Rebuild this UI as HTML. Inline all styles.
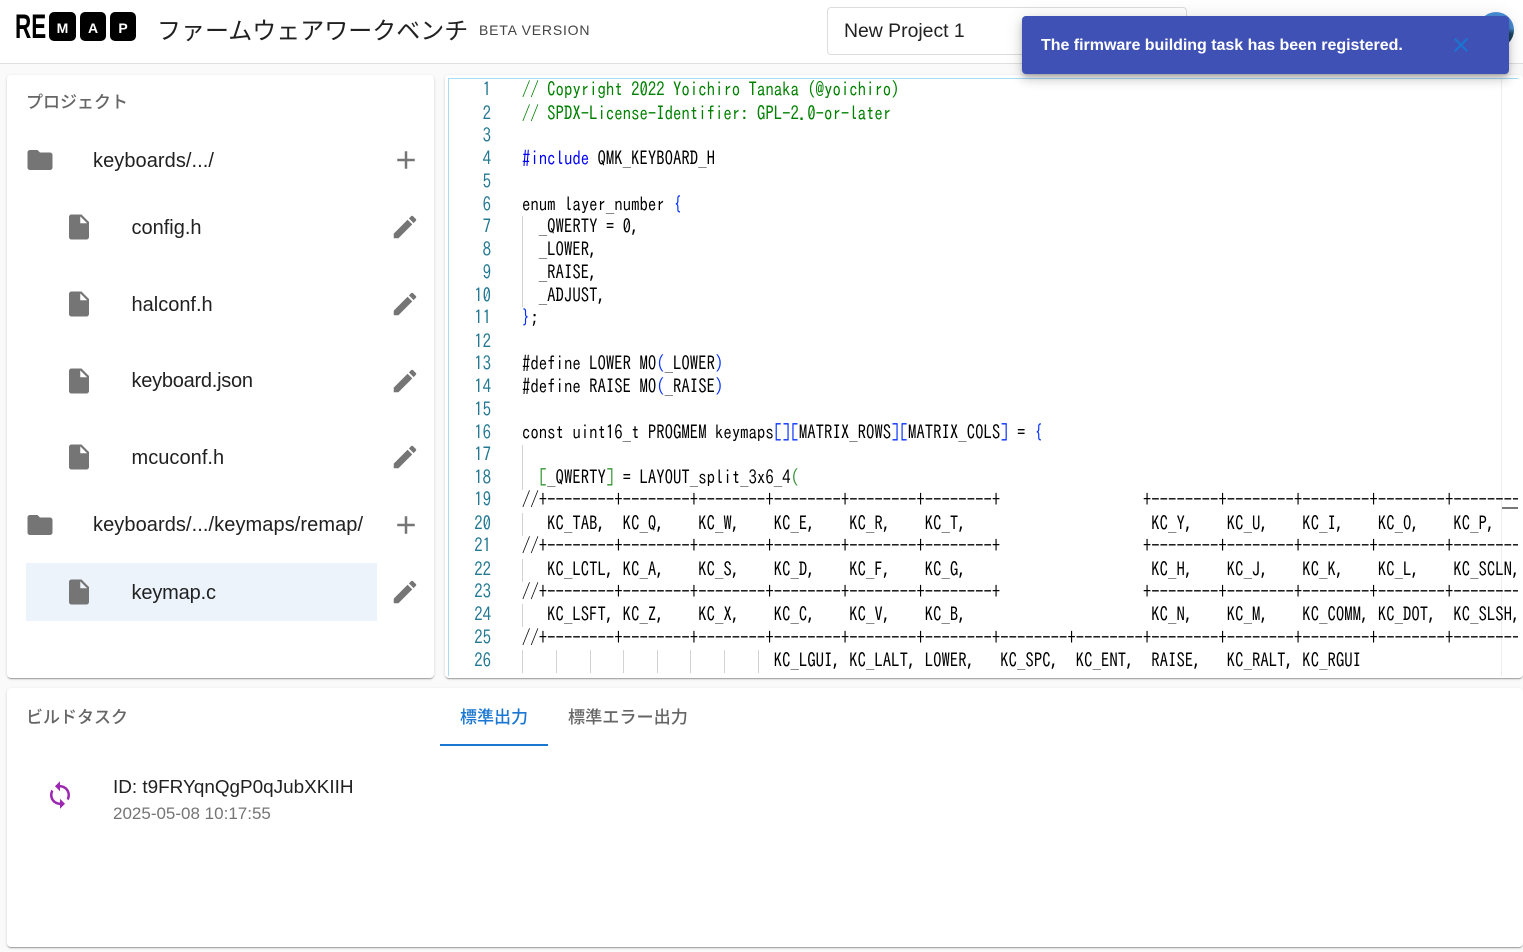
<!DOCTYPE html>
<html lang="ja"><head><meta charset="utf-8"><title>Remap</title>
<style>
html,body{margin:0;padding:0;width:1523px;height:952px;overflow:hidden;background:#fafafa;font-family:"Liberation Sans","Noto Sans CJK JP",sans-serif;color:#212121}
div,span,svg{box-sizing:border-box}
.a{position:absolute;white-space:nowrap}
.card{position:absolute;background:#fff;border-radius:4px;box-shadow:0 2px 1px -1px rgba(0,0,0,.2),0 1px 1px 0 rgba(0,0,0,.14),0 1px 3px 0 rgba(0,0,0,.12)}
svg.i{position:absolute;width:30px;height:30px;fill:#757575}
.t{position:absolute;white-space:nowrap;font-size:20px;line-height:24px;color:#212121}
.k{position:absolute;width:27px;height:29px;top:12px;background:#000;border-radius:5px;color:#fff;font:bold 14px/32px 'Liberation Sans',sans-serif;text-align:center}
#code{position:absolute;left:448px;top:78px;width:1070px;height:598px;overflow:hidden;border-top:1px solid #a6dcf6;border-left:1px solid #a6dcf6;font-family:"IPAGothic",monospace;font-size:19px;color:#000}
#code .l,#code .n{position:absolute;white-space:pre;line-height:24px;height:24px}
#code .l{left:73px;transform:scaleX(.8832);transform-origin:0 50%;width:1400px}
#code .n{left:0;width:42px;text-align:right;color:#237893;transform:scaleX(.8832);transform-origin:100% 50%}
.g{color:#008000}.b{color:#0000ff}.c{color:#0431fa}.d{color:#319331}.e{color:#7b3814}
.v{position:absolute;width:1px;background:#d3d3d3}
</style></head><body>

<div class="a" style="left:0;top:0;width:1523px;height:64px;background:#fff;border-bottom:1px solid #e0e0e0"></div>
<div class="a" style="left:15px;top:8px;font:bold 34px/38px 'Liberation Sans',sans-serif;color:#000;transform-origin:0 0;transform:scaleX(.66)">RE</div>
<div class="k" style="left:49px">M</div>
<div class="k" style="left:80px;width:26px">A</div>
<div class="k" style="left:110px;width:26px">P</div>
<div class="a" style="left:157px;top:14px;font-size:24px;line-height:36px;color:#212121">ファームウェアワークベンチ</div>
<div class="a" style="left:479px;top:20px;font-size:14px;line-height:20px;letter-spacing:.8px;color:#444">BETA VERSION</div>
<div class="a" style="left:827px;top:7px;width:360px;height:48px;border:1px solid #ddd;border-radius:4px;background:#fff"></div>
<div class="a" style="left:844px;top:18px;font-size:19.4px;line-height:26px;color:#212121">New Project 1</div>
<div class="a" style="left:1478px;top:12px;width:36px;height:36px;border-radius:50%;background:linear-gradient(#4a8fd8 0%,#4a8fd8 45%,#1e4a66 60%,#16333f 100%)"></div>

<div class="card" style="left:7px;top:75px;width:427px;height:603px"></div>
<div class="a" style="left:26px;top:90px;font-size:17px;font-weight:500;line-height:26px;color:#666">プロジェクト</div>

<svg class="i" style="left:25px;top:145px" viewBox="0 0 24 24"><path d="M10 4H4c-1.1 0-1.99.9-1.99 2L2 18c0 1.1.9 2 2 2h16c1.1 0 2-.9 2-2V8c0-1.1-.9-2-2-2h-8l-2-2z"/></svg>
<div class="t" style="left:93px;top:149px;letter-spacing:.07px">keyboards/.../</div>
<svg class="i" style="left:391px;top:145px" viewBox="0 0 24 24"><path d="M19 13h-6v6h-2v-6H5v-2h6V5h2v6h6v2z"/></svg>

<svg class="i" style="left:64px;top:212px" viewBox="0 0 24 24"><path d="M6 2c-1.1 0-1.99.9-1.99 2L4 20c0 1.1.89 2 1.99 2H18c1.1 0 2-.9 2-2V8l-6-6H6zm7 7V3.5L18.5 9H13z"/></svg>
<div class="t" style="left:131.5px;top:216px">config.h</div>
<svg class="i" style="left:390.4px;top:212px" viewBox="0 0 24 24"><path d="M3 17.25V21h3.75L17.81 9.94l-3.75-3.75L3 17.25zM20.71 7.04c.39-.39.39-1.02 0-1.41l-2.34-2.34c-.39-.39-1.02-.39-1.41 0l-1.83 1.83 3.75 3.75 1.83-1.83z"/></svg>

<svg class="i" style="left:64px;top:289px" viewBox="0 0 24 24"><path d="M6 2c-1.1 0-1.99.9-1.99 2L4 20c0 1.1.89 2 1.99 2H18c1.1 0 2-.9 2-2V8l-6-6H6zm7 7V3.5L18.5 9H13z"/></svg>
<div class="t" style="left:131.5px;top:293px">halconf.h</div>
<svg class="i" style="left:390.4px;top:289px" viewBox="0 0 24 24"><path d="M3 17.25V21h3.75L17.81 9.94l-3.75-3.75L3 17.25zM20.71 7.04c.39-.39.39-1.02 0-1.41l-2.34-2.34c-.39-.39-1.02-.39-1.41 0l-1.83 1.83 3.75 3.75 1.83-1.83z"/></svg>

<svg class="i" style="left:64px;top:366px" viewBox="0 0 24 24"><path d="M6 2c-1.1 0-1.99.9-1.99 2L4 20c0 1.1.89 2 1.99 2H18c1.1 0 2-.9 2-2V8l-6-6H6zm7 7V3.5L18.5 9H13z"/></svg>
<div class="t" style="left:131.5px;top:369px;letter-spacing:-.25px">keyboard.json</div>
<svg class="i" style="left:390.4px;top:366px" viewBox="0 0 24 24"><path d="M3 17.25V21h3.75L17.81 9.94l-3.75-3.75L3 17.25zM20.71 7.04c.39-.39.39-1.02 0-1.41l-2.34-2.34c-.39-.39-1.02-.39-1.41 0l-1.83 1.83 3.75 3.75 1.83-1.83z"/></svg>

<svg class="i" style="left:64px;top:442px" viewBox="0 0 24 24"><path d="M6 2c-1.1 0-1.99.9-1.99 2L4 20c0 1.1.89 2 1.99 2H18c1.1 0 2-.9 2-2V8l-6-6H6zm7 7V3.5L18.5 9H13z"/></svg>
<div class="t" style="left:131.5px;top:446px;letter-spacing:.05px">mcuconf.h</div>
<svg class="i" style="left:390.4px;top:442px" viewBox="0 0 24 24"><path d="M3 17.25V21h3.75L17.81 9.94l-3.75-3.75L3 17.25zM20.71 7.04c.39-.39.39-1.02 0-1.41l-2.34-2.34c-.39-.39-1.02-.39-1.41 0l-1.83 1.83 3.75 3.75 1.83-1.83z"/></svg>

<svg class="i" style="left:25px;top:510px" viewBox="0 0 24 24"><path d="M10 4H4c-1.1 0-1.99.9-1.99 2L2 18c0 1.1.9 2 2 2h16c1.1 0 2-.9 2-2V8c0-1.1-.9-2-2-2h-8l-2-2z"/></svg>
<div class="t" style="left:93px;top:513px;letter-spacing:.08px">keyboards/.../keymaps/remap/</div>
<svg class="i" style="left:391px;top:510px" viewBox="0 0 24 24"><path d="M19 13h-6v6h-2v-6H5v-2h6V5h2v6h6v2z"/></svg>

<div class="a" style="left:26px;top:563px;width:351px;height:58px;background:#ecf3fb"></div>
<svg class="i" style="left:64px;top:577px" viewBox="0 0 24 24"><path d="M6 2c-1.1 0-1.99.9-1.99 2L4 20c0 1.1.89 2 1.99 2H18c1.1 0 2-.9 2-2V8l-6-6H6zm7 7V3.5L18.5 9H13z"/></svg>
<div class="t" style="left:131.5px;top:581px;letter-spacing:-.15px">keymap.c</div>
<svg class="i" style="left:390.4px;top:577px" viewBox="0 0 24 24"><path d="M3 17.25V21h3.75L17.81 9.94l-3.75-3.75L3 17.25zM20.71 7.04c.39-.39.39-1.02 0-1.41l-2.34-2.34c-.39-.39-1.02-.39-1.41 0l-1.83 1.83 3.75 3.75 1.83-1.83z"/></svg>

<div class="card" style="left:445px;top:75px;width:1078px;height:603px"></div>
<div id="code">
<div class="a" style="left:1052px;top:0;width:1px;height:598px;background:#eee"></div>
<div class="n" style="top:-1px">1</div><div class="l" style="top:-1px"><span class="g">// Copyright 2022 Yoichiro Tanaka (@yoichiro)</span></div>
<div class="n" style="top:23px">2</div><div class="l" style="top:23px"><span class="g">// SPDX-License-Identifier: GPL-2.0-or-later</span></div>
<div class="n" style="top:45px">3</div>
<div class="n" style="top:68px">4</div><div class="l" style="top:68px"><span class="b">#include</span> QMK_KEYBOARD_H</div>
<div class="n" style="top:91px">5</div>
<div class="n" style="top:114px">6</div><div class="l" style="top:114px">enum layer_number <span class="c">{</span></div>
<div class="v" style="left:73px;top:137px;height:91px"></div>
<div class="n" style="top:136px">7</div><div class="l" style="top:136px">  _QWERTY = 0,</div>
<div class="n" style="top:159px">8</div><div class="l" style="top:159px">  _LOWER,</div>
<div class="n" style="top:182px">9</div><div class="l" style="top:182px">  _RAISE,</div>
<div class="n" style="top:205px">10</div><div class="l" style="top:205px">  _ADJUST,</div>
<div class="n" style="top:227px">11</div><div class="l" style="top:227px"><span class="c">}</span>;</div>
<div class="n" style="top:251px">12</div>
<div class="n" style="top:273px">13</div><div class="l" style="top:273px">#define LOWER MO<span class="c">(</span>_LOWER<span class="c">)</span></div>
<div class="n" style="top:296px">14</div><div class="l" style="top:296px">#define RAISE MO<span class="c">(</span>_RAISE<span class="c">)</span></div>
<div class="n" style="top:319px">15</div>
<div class="n" style="top:342px">16</div><div class="l" style="top:342px">const uint16_t PROGMEM keymaps<span class="c">[]</span><span class="c">[</span>MATRIX_ROWS<span class="c">]</span><span class="c">[</span>MATRIX_COLS<span class="c">]</span> = <span class="c">{</span></div>
<div class="v" style="left:73px;top:366px;height:45px"></div>
<div class="n" style="top:364px">17</div>
<div class="n" style="top:387px">18</div><div class="l" style="top:387px">  <span class="d">[</span>_QWERTY<span class="d">]</span> = LAYOUT_split_3x6_4<span class="d">(</span></div>
<div class="n" style="top:409px">19</div><div class="l" style="top:409px">//+--------+--------+--------+--------+--------+--------+                 +--------+--------+--------+--------+--------+--------+</div>
<div class="v" style="left:73px;top:434px;height:23px"></div>
<div class="n" style="top:433px">20</div><div class="l" style="top:433px">   KC_TAB,  KC_Q,    KC_W,    KC_E,    KC_R,    KC_T,                      KC_Y,    KC_U,    KC_I,    KC_O,    KC_P,    KC_BSPC,</div>
<div class="n" style="top:455px">21</div><div class="l" style="top:455px">//+--------+--------+--------+--------+--------+--------+                 +--------+--------+--------+--------+--------+--------+</div>
<div class="v" style="left:73px;top:480px;height:23px"></div>
<div class="n" style="top:479px">22</div><div class="l" style="top:479px">   KC_LCTL, KC_A,    KC_S,    KC_D,    KC_F,    KC_G,                      KC_H,    KC_J,    KC_K,    KC_L,    KC_SCLN, KC_QUOT,</div>
<div class="n" style="top:501px">23</div><div class="l" style="top:501px">//+--------+--------+--------+--------+--------+--------+                 +--------+--------+--------+--------+--------+--------+</div>
<div class="v" style="left:73px;top:525px;height:23px"></div>
<div class="n" style="top:524px">24</div><div class="l" style="top:524px">   KC_LSFT, KC_Z,    KC_X,    KC_C,    KC_V,    KC_B,                      KC_N,    KC_M,    KC_COMM, KC_DOT,  KC_SLSH, KC_RSFT,</div>
<div class="n" style="top:547px">25</div><div class="l" style="top:547px">//+--------+--------+--------+--------+--------+--------+--------+--------+--------+--------+--------+--------+--------+--------+</div>
<div class="v" style="left:73px;top:571px;height:23px"></div><div class="v" style="left:107px;top:571px;height:23px"></div><div class="v" style="left:141px;top:571px;height:23px"></div><div class="v" style="left:174px;top:571px;height:23px"></div><div class="v" style="left:208px;top:571px;height:23px"></div><div class="v" style="left:241px;top:571px;height:23px"></div><div class="v" style="left:275px;top:571px;height:23px"></div><div class="v" style="left:309px;top:571px;height:23px"></div>
<div class="n" style="top:570px">26</div><div class="l" style="top:570px">                              KC_LGUI, KC_LALT, LOWER,   KC_SPC,  KC_ENT,  RAISE,   KC_RALT, KC_RGUI</div>
<div class="a" style="left:1053px;top:428px;width:17px;height:2px;background:#777"></div>
</div>

<div class="card" style="left:7px;top:688px;width:1516px;height:259px"></div>
<div class="a" style="left:26px;top:705px;font-size:17px;font-weight:500;line-height:26px;color:#666">ビルドタスク</div>
<div class="a" style="left:460px;top:705px;font-size:17px;font-weight:500;line-height:26px;color:#1976d2">標準出力</div>
<div class="a" style="left:440px;top:744px;width:108px;height:2px;background:#1976d2"></div>
<div class="a" style="left:568px;top:704px;font-size:17.14px;font-weight:500;line-height:26px;color:#666">標準エラー出力</div>
<svg class="i" style="left:45px;top:780px;fill:#9c27b0" viewBox="0 0 24 24"><path d="M12 4V1L8 5l4 4V6c3.31 0 6 2.69 6 6 0 1.01-.25 1.97-.7 2.8l1.46 1.46C19.54 15.03 20 13.57 20 12c0-4.42-3.58-8-8-8zm0 14c-3.31 0-6-2.69-6-6 0-1.01.25-1.97.7-2.8L5.24 7.74C4.46 8.97 4 10.43 4 12c0 4.42 3.58 8 8 8v3l4-4-4-4v3z"/></svg>
<div class="a" style="left:113px;top:776px;font-size:18.9px;line-height:24px;color:#212121">ID: t9FRYqnQgP0qJubXKIIH</div>
<div class="a" style="left:113px;top:803px;font-size:17px;line-height:22px;color:#757575">2025-05-08 10:17:55</div>

<div class="a" style="left:1022px;top:16px;width:487px;height:58px;background:#3f51b5;border-radius:4px;box-shadow:0 3px 5px -1px rgba(0,0,0,.2),0 6px 10px 0 rgba(0,0,0,.14),0 1px 18px 0 rgba(0,0,0,.12)"></div>
<div class="a" style="left:1041px;top:34px;font-size:16px;line-height:24px;font-weight:bold;color:#fff;letter-spacing:-.02px">The firmware building task has been registered.</div>
<svg class="a" style="left:1449px;top:33px;width:24px;height:24px" viewBox="0 0 24 24"><path d="M19 6.41 17.59 5 12 10.59 6.41 5 5 6.41 10.59 12 5 17.59 6.41 19 12 13.41 17.59 19 19 17.59 13.41 12z" fill="#1976d2"/></svg>
</body></html>
